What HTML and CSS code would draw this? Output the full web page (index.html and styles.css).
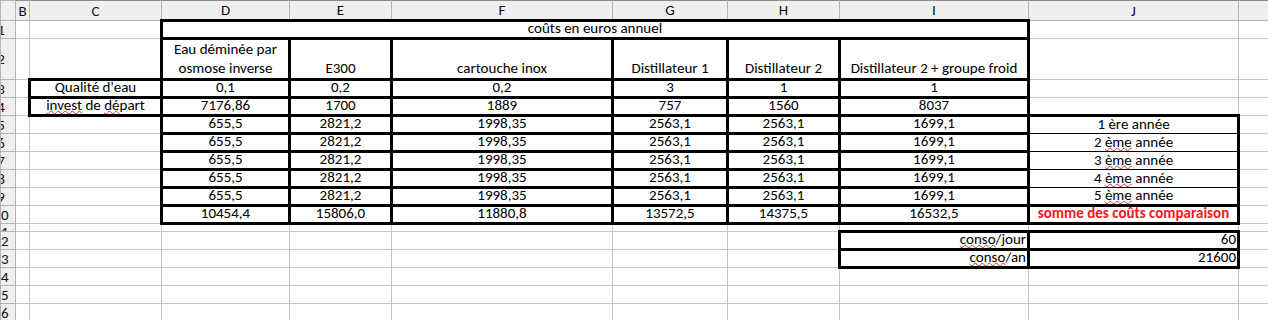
FILE: index.html
```html
<!DOCTYPE html>
<html lang="fr">
<head>
  <meta charset="UTF-8">
  <title>Comparaison des coûts</title>
  <link rel="stylesheet" href="styles.css">
</head>
<body>

  <table class="sheet">
    <colgroup>
      <col class="w-rh"><col class="w-b"><col class="w-c"><col class="w-d"><col class="w-e">
      <col class="w-f"><col class="w-g"><col class="w-h"><col class="w-i"><col class="w-j"><col class="w-k">
    </colgroup>
    <thead>
      <tr class="hdr">
        <th class="rh"></th><th>B</th><th>C</th><th>D</th><th>E</th><th>F</th>
        <th>G</th><th>H</th><th>I</th><th>J</th><th></th>
      </tr>
    </thead>
    <tbody>
      <tr class="r1">
        <th class="rh"><span>1</span></th><td></td><td></td>
        <td colspan="6" class="box ctr">coûts en euros annuel</td><td></td><td></td>
      </tr>
      <tr class="r2">
        <th class="rh"><span>2</span></th><td></td><td></td>
        <td class="box ctr">Eau déminée par<br>osmose inverse</td>
        <td class="box ctr">E300</td>
        <td class="box ctr">cartouche inox</td>
        <td class="box ctr">Distillateur 1</td>
        <td class="box ctr">Distillateur 2</td>
        <td class="box ctr">Distillateur 2 + groupe froid</td>
        <td></td><td></td>
      </tr>
      <tr>
        <th class="rh"><span>3</span></th><td></td>
        <td class="box ctr">Qualité d'eau</td>
        <td class="box ctr">0,1</td><td class="box ctr">0,2</td><td class="box ctr">0,2</td>
        <td class="box ctr">3</td><td class="box ctr">1</td><td class="box ctr">1</td>
        <td></td><td></td>
      </tr>
      <tr>
        <th class="rh"><span>4</span></th><td></td>
        <td class="box ctr"><span class="spell">invest</span> de <span class="spell">dé</span>part</td>
        <td class="box ctr">7176,86</td><td class="box ctr">1700</td><td class="box ctr">1889</td>
        <td class="box ctr">757</td><td class="box ctr">1560</td><td class="box ctr">8037</td>
        <td></td><td></td>
      </tr>
      <tr>
        <th class="rh"><span>5</span></th><td></td><td></td>
        <td class="box ctr">655,5</td><td class="box ctr">2821,2</td><td class="box ctr">1998,35</td>
        <td class="box ctr">2563,1</td><td class="box ctr">2563,1</td><td class="box ctr">1699,1</td>
        <td class="yr yr-top ctr">1 ère année</td><td></td>
      </tr>
      <tr>
        <th class="rh"><span>6</span></th><td></td><td></td>
        <td class="box ctr">655,5</td><td class="box ctr">2821,2</td><td class="box ctr">1998,35</td>
        <td class="box ctr">2563,1</td><td class="box ctr">2563,1</td><td class="box ctr">1699,1</td>
        <td class="yr ctr">2 <span class="spell">ème</span> année</td><td></td>
      </tr>
      <tr>
        <th class="rh"><span>7</span></th><td></td><td></td>
        <td class="box ctr">655,5</td><td class="box ctr">2821,2</td><td class="box ctr">1998,35</td>
        <td class="box ctr">2563,1</td><td class="box ctr">2563,1</td><td class="box ctr">1699,1</td>
        <td class="yr ctr">3 <span class="spell">ème</span> année</td><td></td>
      </tr>
      <tr>
        <th class="rh"><span>8</span></th><td></td><td></td>
        <td class="box ctr">655,5</td><td class="box ctr">2821,2</td><td class="box ctr">1998,35</td>
        <td class="box ctr">2563,1</td><td class="box ctr">2563,1</td><td class="box ctr">1699,1</td>
        <td class="yr ctr">4 <span class="spell">ème</span> année</td><td></td>
      </tr>
      <tr>
        <th class="rh"><span>9</span></th><td></td><td></td>
        <td class="box ctr">655,5</td><td class="box ctr">2821,2</td><td class="box ctr">1998,35</td>
        <td class="box ctr">2563,1</td><td class="box ctr">2563,1</td><td class="box ctr">1699,1</td>
        <td class="yr ctr">5 <span class="spell">ème</span> année</td><td></td>
      </tr>
      <tr>
        <th class="rh"><span>10</span></th><td></td><td></td>
        <td class="box ctr">10454,4</td><td class="box ctr">15806,0</td><td class="box ctr">11880,8</td>
        <td class="box ctr">13572,5</td><td class="box ctr">14375,5</td><td class="box ctr">16532,5</td>
        <td class="box ctr total">somme des coûts comparaison</td><td></td>
      </tr>
      <tr class="r11">
        <th class="rh"><span>11</span></th><td></td><td></td><td></td><td></td><td></td>
        <td></td><td></td><td></td><td></td><td></td>
      </tr>
      <tr>
        <th class="rh"><span>12</span></th><td></td><td></td><td></td><td></td><td></td>
        <td></td><td></td>
        <td class="box num"><span class="spell">conso</span>/jour</td>
        <td class="box num">60</td><td></td>
      </tr>
      <tr>
        <th class="rh"><span>13</span></th><td></td><td></td><td></td><td></td><td></td>
        <td></td><td></td>
        <td class="box num"><span class="spell">conso</span>/an</td>
        <td class="box num">21600</td><td></td>
      </tr>
      <tr>
        <th class="rh"><span>14</span></th><td></td><td></td><td></td><td></td><td></td>
        <td></td><td></td><td></td><td></td><td></td>
      </tr>
      <tr>
        <th class="rh"><span>15</span></th><td></td><td></td><td></td><td></td><td></td>
        <td></td><td></td><td></td><td></td><td></td>
      </tr>
      <tr>
        <th class="rh"><span>16</span></th><td></td><td></td><td></td><td></td><td></td>
        <td></td><td></td><td></td><td></td><td></td>
      </tr>
    </tbody>
  </table>

</body>
</html>
```

FILE: styles.css
```css
* {
  box-sizing: border-box;
  font-family: Calibri, Carlito, Lato, 'Liberation Sans', sans-serif;
}

body {
  margin: 0;
  padding: 0;
  background: white;
  color: #000;
  overflow: hidden;
}

/* spreadsheet grid */
.sheet {
  border-collapse: collapse;
  table-layout: fixed;
  width: 1268px;
  font-size: 15px;
}

.w-rh { width: 15px; }
.w-b  { width: 14px; }
.w-c  { width: 132px; }
.w-d  { width: 128px; }
.w-e  { width: 102px; }
.w-f  { width: 221px; }
.w-g  { width: 115px; }
.w-h  { width: 112px; }
.w-i  { width: 189px; }
.w-j  { width: 210px; }
.w-k  { width: 30px; }

.sheet tr { height: 18px; }
.sheet .hdr { height: 20px; }
.sheet .r2 { height: 40px; }
.sheet .r11 { height: 8px; }

td {
  border: 1px solid #c6c6c6;
  padding: 0 1px 2px;
  vertical-align: bottom;
  white-space: nowrap;
  line-height: 13px;
}

/* column and row headers */
.hdr th {
  background: #efefef;
  border: 1px solid #b4b4b4;
  border-top: 1px solid #8c8c8c;
  font-weight: normal;
  font-size: 15px;
  padding: 0;
  line-height: 18px;
  color: #111;
}

th.rh {
  background: #efefef;
  border: 1px solid #b4b4b4;
  font-weight: normal;
  font-size: 15px;
  padding: 0;
  overflow: hidden;
  color: #111;
  line-height: 14px;
}

/* numbers are centred on a wider header; only the right half shows */
th.rh span {
  display: block;
  width: 30px;
  margin-left: -15px;
  text-align: center;
}

/* the spacer row is too short for its number */
.r11 th.rh span {
  height: 6px;
  line-height: 14px;
  overflow: hidden;
}

.r2 td {
  white-space: normal;
  line-height: 19px;
  padding-bottom: 0;
}

.ctr { text-align: center; }
.num { text-align: right; }

.box { border: 3px solid #000; }

/* year labels: heavy outline, thin rules inside */
.yr {
  border: 1px solid #000;
  border-left: 3px solid #000;
  border-right: 3px solid #000;
}
.yr-top { border-top: 3px solid #000; }

.total {
  color: #ee1c1c;
  font-weight: bold;
}

.spell {
  text-decoration: underline wavy #d03030;
  text-decoration-thickness: 1px;
  text-underline-offset: 0;
}
```
